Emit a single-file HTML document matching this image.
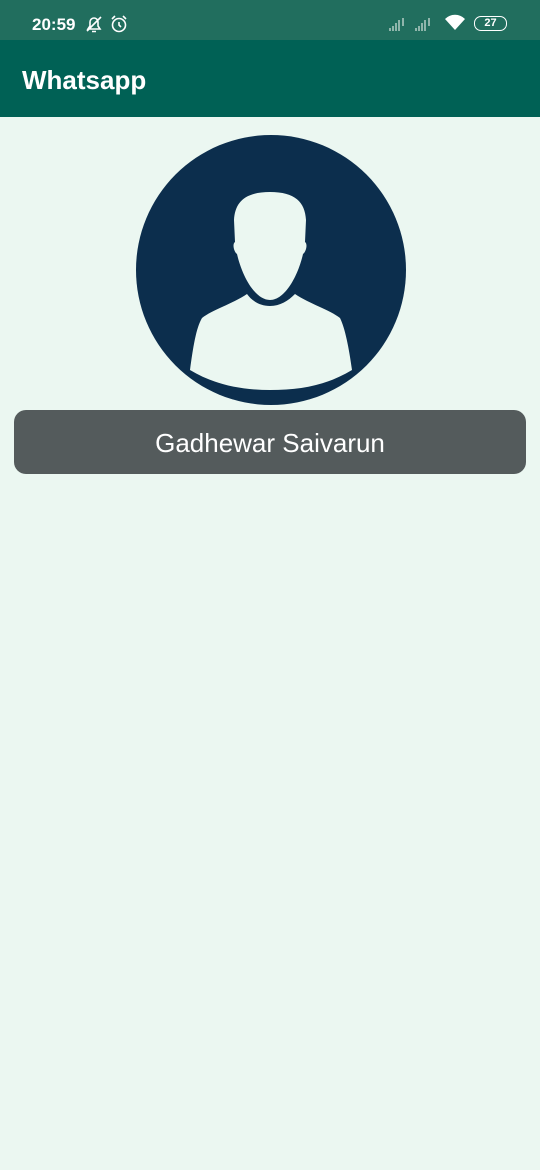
<!DOCTYPE html>
<html><head><meta charset="utf-8"><style>
body{margin:0;width:540px;height:1170px;background:#ebf7f1;font-family:"Liberation Sans",sans-serif;position:relative;overflow:hidden}
.sb{position:absolute;top:0;left:0;width:540px;height:40px;background:#216e5e;color:#fff}
.ab{position:absolute;top:40px;left:0;width:540px;height:77px;background:#006155;color:#fff}
.btn{position:absolute;left:14px;top:410px;width:512px;height:64px;background:#545b5c;border-radius:12px;color:#fff;font-size:26px;text-align:center;line-height:66px}
</style></head><body>
<div class="sb">
<div style="position:absolute;left:32px;top:15px;font-size:17px;font-weight:bold">20:59</div>
<svg style="position:absolute;left:84px;top:14px" width="20" height="20" viewBox="0 0 20 20" fill="none" stroke="#fff" stroke-width="1.6"><path d="M4 15h12l-2-3V8a4 4 0 0 0-8 0v4z M8 17.5h4 M3 17L17 3"/></svg>
<svg style="position:absolute;left:109px;top:14px" width="20" height="20" viewBox="0 0 20 20" fill="none" stroke="#fff" stroke-width="1.6"><circle cx="10" cy="11" r="6.5"/><path d="M10 8v3l2 2 M3 5l3-3 M17 5l-3-3"/></svg>
<svg style="position:absolute;left:389px;top:17px" width="50" height="14" viewBox="0 0 50 14" fill="#8fb5ab"><rect x="0" y="11" width="2" height="3"/><rect x="3" y="9" width="2" height="5"/><rect x="6" y="6" width="2" height="8"/><rect x="9" y="3" width="2" height="11"/><rect x="13" y="1" width="2" height="8"/><rect x="26" y="11" width="2" height="3"/><rect x="29" y="9" width="2" height="5"/><rect x="32" y="6" width="2" height="8"/><rect x="35" y="3" width="2" height="11"/><rect x="39" y="1" width="2" height="8"/></svg>
<svg style="position:absolute;left:444px;top:14px" width="22" height="18" viewBox="0 0 22 18"><path d="M11 16L1 5a14 14 0 0 1 20 0z" fill="#fff"/></svg>
<div style="position:absolute;left:474px;top:16px;width:31px;height:13px;border:1.5px solid #fff;border-radius:7px;font-size:11px;font-weight:bold;text-align:center;line-height:13px">27</div>
</div>
<div class="ab"><div style="position:absolute;left:22px;top:25px;font-size:26px;font-weight:bold">Whatsapp</div></div>
<svg style="position:absolute;left:0;top:0" width="540" height="420" viewBox="0 0 540 420">
<circle cx="271" cy="270" r="135" fill="#0c2e4d"/>
<path d="M270 192c-25 0-35 10-36 28l1 22c-3 2-1 10 2 12 5 22 18 46 33 46s28-24 33-46c3-2 5-10 2-12l1-22c-1-18-11-28-36-28z" fill="#ebf7f1"/>
<path d="M247 294c5 7 13 12 23 12s18-5 25-12c15 10 35 16 45 24 5 10 9 30 12 52 -25 15-50 20-82 20-30 0-57-6-80-20 3-22 6-42 12-52 10-8 30-14 45-24z" fill="#ebf7f1"/>
</svg>
<div class="btn">Gadhewar Saivarun</div>
</body></html>
